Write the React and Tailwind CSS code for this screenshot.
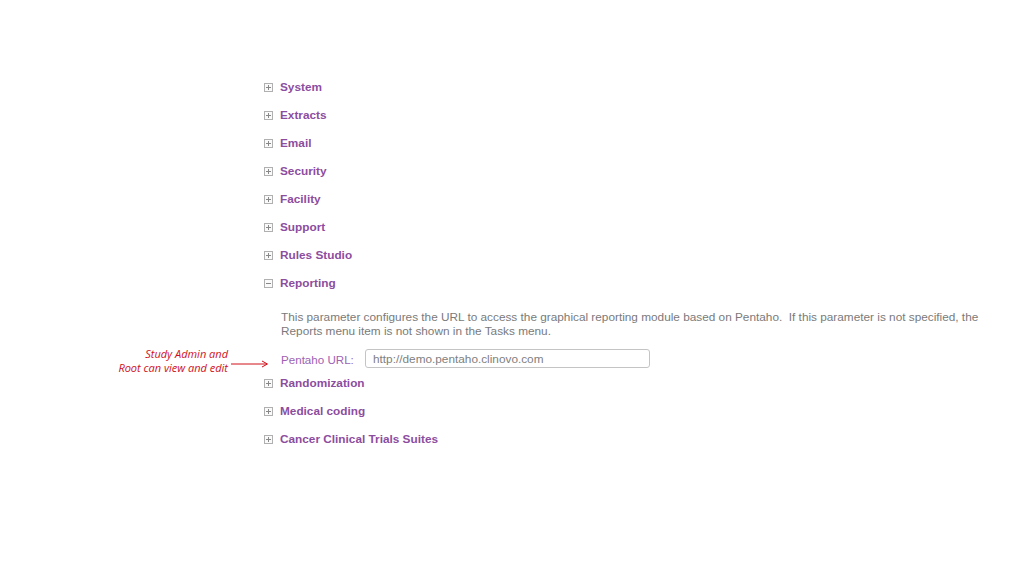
import React from "react";

function BoxIcon({ open }) {
  return (
    <svg width="9" height="9" viewBox="0 0 9 9" className="shrink-0">
      <rect x="0.5" y="0.5" width="8" height="8" fill="#fafafa" stroke="#b0b0b0" />
      <line x1="2" y1="4.5" x2="7" y2="4.5" stroke="#888" />
      {!open && <line x1="4.5" y1="2" x2="4.5" y2="7" stroke="#888" />}
    </svg>
  );
}

function Row({ label, open }) {
  return (
    <div className="flex h-[28px] items-center">
      <div className="w-[16px] flex items-center">
        <BoxIcon open={open} />
      </div>
      <span className="text-[11.8px] font-bold text-[#8c4d9f] pt-[1px]">{label}</span>
    </div>
  );
}

export default function App() {
  const before = ["System", "Extracts", "Email", "Security", "Facility", "Support", "Rules Studio"];
  const after = ["Randomization", "Medical coding", "Cancer Clinical Trials Suites"];
  return (
    <div
      className="w-[1024px] h-[576px] bg-white overflow-hidden"
      style={{ fontFamily: '"Liberation Sans", Arial, sans-serif' }}
    >
      <div className="pt-[73px] pl-[264px]">
        {before.map((l) => (
          <Row key={l} label={l} />
        ))}
        <Row label="Reporting" open />
        <div className="pl-[17px] pt-[13px]">
          <p className="text-[11.8px] leading-[14px] text-[#7a7a7a] w-[700px]">
            This parameter configures the URL to access the graphical reporting module based on Pentaho.&nbsp; If this parameter is not specified, the Reports menu item is not shown in the Tasks menu.
          </p>
          <div className="relative flex items-center pt-[10px]">
            <div
              className="absolute left-[-183px] top-[9px] w-[130px] whitespace-nowrap text-right text-[11px] leading-[14px] italic text-[#d0101a]"
              style={{ fontFamily: '"Open Sans", sans-serif' }}
            >
              <div>Study Admin and</div>
              <div>Root can view and edit</div>
            </div>
            <svg className="absolute left-[-50px] top-[22px]" width="38" height="8" viewBox="0 0 38 8">
              <line x1="0" y1="4" x2="36" y2="4" stroke="#d0101a" strokeWidth="1" />
              <path d="M31 1 L36.5 4 L31 7" fill="none" stroke="#d0101a" strokeWidth="1" />
            </svg>
            <span className="text-[11.6px] text-[#9d62b3] w-[84px] leading-[19px] pt-[2px]">Pentaho URL:</span>
            <div className="w-[285px] h-[19px] border border-[#c4c4c4] rounded-[3px] flex items-center px-[7px] pt-[2px] text-[11.8px] text-[#808080]">
              http://demo.pentaho.clinovo.com
            </div>
          </div>
        </div>
        {after.map((l) => (
          <Row key={l} label={l} />
        ))}
      </div>
    </div>
  );
}
